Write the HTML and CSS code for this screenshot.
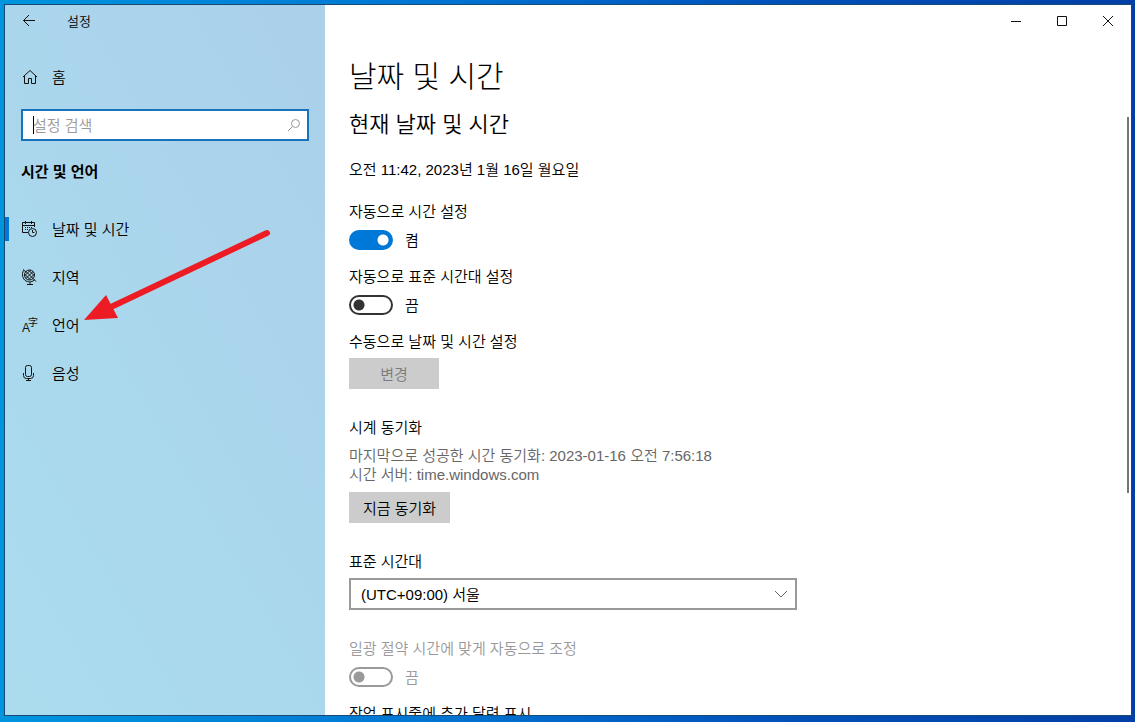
FILE: index.html
```
<!DOCTYPE html>
<html lang="ko">
<head>
    <meta charset="UTF-8">
    <meta name="viewport" content="width=device-width, initial-scale=1.0">
    <title>설정</title>
    <link rel="stylesheet" href="styles.css">
</head>
<body>
    <div class="window">
        <aside class="sidebar">
            <header class="titlebar">
                <button class="back" aria-label="뒤로">
                    <svg width="14" height="14" viewBox="0 0 14 14"><path d="M13 6.500H1.500M7 1L1.500 6.500L7 12"/></svg>
                </button>
                <span class="app-title">설정</span>
            </header>
            <a class="nav-item home" href="#">
                <svg width="16" height="16" viewBox="0 0 16 16"><path d="M1 8L8 1.500L15 8M2.500 7V14.500H6.500V9.500H9.500V14.500H13.500V7"/></svg>
                <span>홈</span>
            </a>
            <div class="search">
                <input type="text" class="search-input" placeholder="설정 검색" aria-label="설정 검색">
                <svg width="14" height="14" viewBox="0 0 14 14"><circle cx="8.500" cy="5.500" r="4"/><path d="M5.500 8.500L1 13"/></svg>
            </div>
            <h2 class="section-title">시간 및 언어</h2>
            <nav class="nav">
                <a class="nav-item active" href="#">
                    <svg width="16" height="16" viewBox="0 0 16 16">
                        <path d="M6 11.500H.5V1.500H12.500V6M.5 4.500H12.500M3.500 0V3M9.500 0V3"/>
                        <path d="M3 6.500H11M3 8.500H7" stroke-dasharray="1 1"/>
                        <circle cx="10.500" cy="11.500" r="4"/>
                        <path d="M10.500 9V11.500H12.500"/>
                    </svg>
                    <span>날짜 및 시간</span>
                </a>
                <a class="nav-item" href="#">
                    <svg width="16" height="16" viewBox="0 0 16 16">
                        <circle cx="7.500" cy="6" r="5"/>
                        <path d="M4 9.500L11 2.500M3 6.500L8 1.500M7 10.500L12 5.500M4 2.500L11 9.500M3 5.500L8 10.500M7 1.500L12 6.500"/>
                        <path d="M1.500 1.500C-.5 5 .5 10 4 12C7 13.500 10.500 13 13 10.500M1 .5L4 3M11 9.500L14 12.500M8 13V15M5 15.500H11"/>
                    </svg>
                    <span>지역</span>
                </a>
                <a class="nav-item" href="#">
                    <svg class="language-icon" width="16" height="16" viewBox="0 0 16 16">
                        <text class="glyph-a" x="0" y="15">A</text>
                        <text class="glyph-ja" x="6" y="9">字</text>
                    </svg>
                    <span>언어</span>
                </a>
                <a class="nav-item" href="#">
                    <svg width="16" height="16" viewBox="0 0 16 16"><rect x="3.500" y=".5" width="6" height="11" rx="2"/><path d="M1.500 8V10.500Q1.500 13.500 4.500 13.500H8.500Q11.500 13.500 11.500 10.500V8M6.500 13.500V15.500M4 15.500H9"/></svg>
                    <span>음성</span>
                </a>
            </nav>
        </aside>

        <main class="main">
            <header class="titlebar controls">
                <button class="control" aria-label="최소화"><svg width="12" height="12" viewBox="0 0 12 12"><path d="M1 6.500H11"/></svg></button>
                <button class="control" aria-label="최대화"><svg width="12" height="12" viewBox="0 0 12 12"><path d="M1.500 1.500H10.500V10.500H1.500Z"/></svg></button>
                <button class="control" aria-label="닫기"><svg width="12" height="12" viewBox="0 0 12 12"><path d="M1 1L11 11M11 1L1 11"/></svg></button>
            </header>
            <div class="content">
                <h1>날짜 및 시간</h1>
                <h2>현재 날짜 및 시간</h2>
                <p class="now">오전 11:42, 2023년 1월 16일 월요일</p>

                <label class="label" for="auto-time">자동으로 시간 설정</label>
                <div class="toggle-row">
                    <input type="checkbox" class="toggle" id="auto-time" checked>
                    <span>켬</span>
                </div>

                <label class="label" for="auto-zone">자동으로 표준 시간대 설정</label>
                <div class="toggle-row">
                    <input type="checkbox" class="toggle" id="auto-zone">
                    <span>끔</span>
                </div>

                <p class="label">수동으로 날짜 및 시간 설정</p>
                <button class="button change" disabled>변경</button>

                <p class="label">시계 동기화</p>
                <p class="sync-info">마지막으로 성공한 시간 동기화: 2023-01-16 오전 7:56:18<br>시간 서버: time.windows.com</p>
                <button class="button">지금 동기화</button>

                <label class="label" for="zone">표준 시간대</label>
                <div class="select-box">
                    <select id="zone">
                        <option>(UTC+09:00) 서울</option>
                    </select>
                    <svg width="14" height="8" viewBox="0 0 14 8"><path d="M1 1L7 7L13 1"/></svg>
                </div>

                <label class="label disabled" for="dst">일광 절약 시간에 맞게 자동으로 조정</label>
                <div class="toggle-row disabled">
                    <input type="checkbox" class="toggle" id="dst" disabled>
                    <span>끔</span>
                </div>

                <p class="label">작업 표시줄에 추가 달력 표시</p>
            </div>
            <div class="scrollbar"></div>
        </main>

        <svg class="arrow" width="190" height="96" viewBox="0 0 190 96">
            <path class="arrow-line" d="M182 8L26 82"/>
            <path class="arrow-head" d="M-1 95L21 70L33 93Z"/>
        </svg>
    </div>
</body>
</html>
```
FILE: styles.css
```
:root {
    --accent: #0078d7;
    --search-border: #1873bc;
    --button-background: #cccccc;
    --muted: #666;
    --disabled: #999;
}
* {
    box-sizing: border-box;
}
body {
    height: 100vh;
    margin: 0;
    padding: 4px 3px 6px 4px;
    overflow: hidden;
    background: linear-gradient(to right, #0095de, #0078d4 35%, #0050b8 70%, #003fa6);
    color: #000;
    font-family: "Liberation Sans", "Noto Sans CJK KR", sans-serif;
    font-size: 15px;
    font-weight: 350;
    line-height: 20px;
}
h1, h2, p {
    margin: 0;
    font-weight: inherit;
}
svg {
    flex: none;
    fill: none;
    stroke: #111;
}
button, input, select {
    font: inherit;
}
.window {
    position: relative;
    display: flex;
    height: 100%;
    border: 1px solid #174a72;
    background: #fff;
}

/* Sidebar */
.sidebar {
    flex: 0 0 320px;
    background: linear-gradient(60deg, #aadcee, #aad8ed 40%, #abd0ea);
}
.titlebar {
    display: flex;
    align-items: center;
    height: 32px;
}
.back {
    display: flex;
    width: 48px;
    padding: 0 17px;
    border: none;
    background: none;
}
.app-title {
    padding: 2px 0 0 14px;
    font-size: 13px;
}
.nav-item {
    display: flex;
    align-items: center;
    gap: 14px;
    height: 48px;
    padding-left: 17px;
    color: inherit;
    text-decoration: none;
}
.nav-item span, .toggle-row span {
    padding-top: 2px;
}
.home {
    margin-top: 16px;
}
.search {
    display: flex;
    align-items: center;
    height: 32px;
    margin: 8px 16px 0;
    padding-right: 6px;
    border: 2px solid var(--search-border);
    background: #fff;
}
.search svg {
    stroke: var(--disabled);
}
.search-input {
    flex: 1;
    min-width: 0;
    height: 100%;
    padding: 0 10px;
    border: none;
    outline: none;
    background: linear-gradient(#000, #000) 10px center / 1px 18px no-repeat;
}
.search-input::placeholder {
    color: var(--disabled);
}
.section-title {
    margin: 21px 16px 23px;
    font-size: 15px;
    font-weight: bold;
}
.active {
    background: linear-gradient(var(--accent), var(--accent)) left center / 4px 24px no-repeat;
}
.language-icon {
    overflow: visible;
}
.glyph-a, .glyph-ja {
    fill: #111;
    stroke: none;
    font-size: 12px;
    font-weight: normal;
}
.glyph-ja {
    font-size: 10px;
}

/* Main pane */
.main {
    position: relative;
    flex: 1;
    min-width: 0;
    overflow: hidden;
}
.controls {
    justify-content: flex-end;
}
.control {
    display: flex;
    align-items: center;
    justify-content: center;
    width: 46px;
    height: 32px;
    padding: 0;
    border: none;
    background: none;
}
.content {
    padding: 20px 24px 0;
}
.content h1 {
    font-size: 30px;
    font-weight: 300;
    line-height: 40px;
}
.content h2 {
    margin-top: 14px;
    font-size: 22px;
    line-height: 28px;
}
.now {
    margin: 21px 0 22px;
}
.label {
    display: block;
}
.toggle-row {
    display: flex;
    align-items: center;
    gap: 12px;
    height: 20px;
    margin: 8px 0 17px;
}
.toggle {
    appearance: none;
    width: 44px;
    height: 20px;
    margin: 0;
    border: 2px solid #333;
    border-radius: 10px;
    background: radial-gradient(circle at 8px 8px, #333 5px, transparent 6px);
}
.toggle:checked {
    border-color: var(--accent);
    background: radial-gradient(circle at 32px 8px, #fff 5px, var(--accent) 6px);
}
.toggle:disabled {
    border-color: var(--disabled);
    background: radial-gradient(circle at 8px 8px, var(--disabled) 5px, transparent 6px);
}
.disabled {
    color: var(--disabled);
}
.button {
    display: block;
    height: 31px;
    margin: 6px 0 29px;
    padding: 2px 14px 0;
    border: none;
    background: var(--button-background);
    color: #000;
}
.change {
    min-width: 90px;
}
.button:disabled {
    color: #7a7a7a;
}
.sync-info {
    margin: 8px 0;
    color: var(--muted);
    line-height: 19px;
}
.select-box {
    display: grid;
    align-items: center;
    max-width: 448px;
    margin: 6px 0 29px;
}
.select-box select, .select-box svg {
    grid-area: 1 / 1;
}
.select-box select {
    appearance: none;
    width: 100%;
    height: 32px;
    padding: 2px 32px 0 10px;
    border: 2px solid var(--disabled);
    border-radius: 0;
    background: #fff;
    color: #000;
}
.select-box svg {
    justify-self: end;
    margin-right: 9px;
    stroke: #666;
    pointer-events: none;
}
.sync-info + .button {
    margin-top: 8px;
}
.scrollbar {
    position: absolute;
    top: 112px;
    right: 2px;
    width: 2px;
    height: 53%;
    background: #767676;
}

/* Pointer drawn over the menu */
.arrow {
    position: absolute;
    top: 220px;
    left: 80px;
    overflow: visible;
    pointer-events: none;
}
.arrow-line {
    stroke: #ed1c24;
    stroke-width: 6;
    stroke-linecap: round;
}
.arrow-head {
    fill: #ed1c24;
    stroke: none;
}
```
